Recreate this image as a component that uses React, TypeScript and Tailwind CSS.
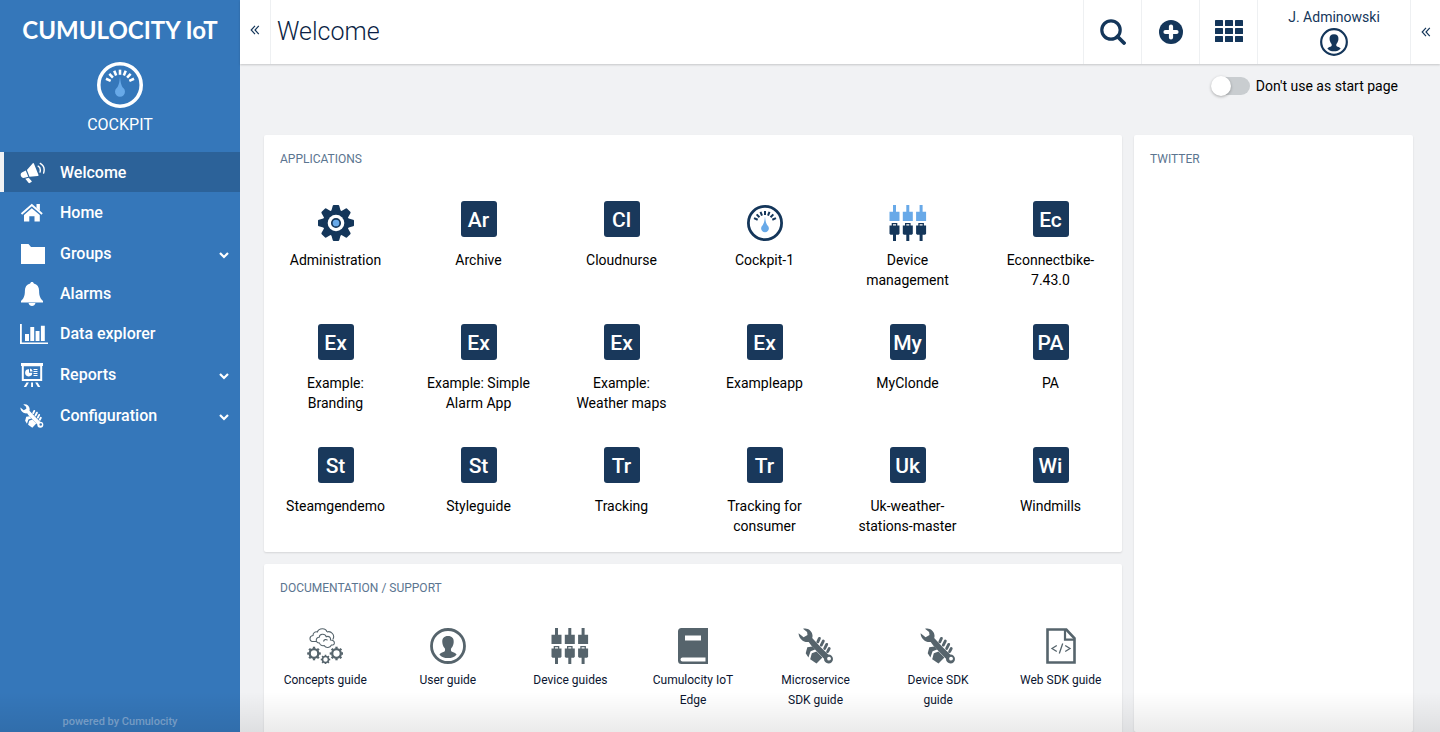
import React from "react";

type IconProps = { className?: string };

function Gauge({ className, needle }: IconProps & { needle: string }) {
  return (
    <svg viewBox="0 0 36 36" className={className} fill="none" stroke="currentColor" aria-hidden="true">
      <circle cx="18" cy="18" r="16.6" strokeWidth="2.8" />
      <g strokeWidth="2">
        {[-66, -44, -22, 0, 22, 44, 66].map((a) => (
          <path key={a} d="M18 6v4" transform={`rotate(${a} 18 18)`} />
        ))}
      </g>
      <path d="M18 11.300c.5 5 1 7.300 2.600 9.100a3.900 3.900 0 1 1-5.200 0c1.600-1.800 2.100-4.100 2.600-9.100z" fill={needle} stroke="none" />
    </svg>
  );
}

function Megaphone({ className }: IconProps) {
  return (
    <svg viewBox="0 0 26 22" className={className} fill="currentColor" aria-hidden="true">
      <path d="M12.800 1.300q.8-.5 1.200.4l4.500 11.400q.3 1-.7 1l-8.300.6L6.900 8z" />
      <path d="M5.800 8.600 8.300 14.800l-3.600 1C1.200 16.800-1 11.800 2.300 10.200z" />
      <path d="m5.300 16.800 3.400-1 2.900 3.100q.5.700-.2 1.100l-1.700 1q-.7.400-1.200-.2z" />
      <path d="M18.200 4.200c1.700 1 2.500 3.400 1.800 5.900M20.300 1.400c3.300 2 4.500 6 3.300 9.700" fill="none" stroke="currentColor" strokeWidth="1.400" strokeLinecap="round" />
    </svg>
  );
}

function House({ className }: IconProps) {
  return (
    <svg viewBox="0 0 24 20" className={className} fill="currentColor" aria-hidden="true">
      <path d="m1.500 11 10.300-9 10.300 9" fill="none" stroke="currentColor" strokeWidth="1.900" />
      <path d="M16.500 1h3.400v7l-3.400-3z" />
      <path d="M4 11.900 11.800 5.300l8 6.600V18.500h-5.300v-5.300H9.300v5.300H4z" />
    </svg>
  );
}

function Folder({ className }: IconProps) {
  return (
    <svg viewBox="0 0 26 22" className={className} fill="currentColor" aria-hidden="true">
      <path d="M1 1h7.500l2.500 3h14v17H1z" />
    </svg>
  );
}

function Bell({ className }: IconProps) {
  return (
    <svg viewBox="0 0 24 26" className={className} fill="currentColor" aria-hidden="true">
      <path d="M12 1c1 0 1.700.7 1.800 1.600 3.600.9 5.300 3.600 5.300 7.200 0 5.700 1.400 7.800 3.900 10.200v1.500H1V20c2.500-2.400 3.900-4.500 3.900-10.200 0-3.600 1.700-6.300 5.300-7.200C10.300 1.700 11 1 12 1z" />
      <path d="M8.500 22h7c-.5 1.900-1.800 3-3.500 3s-3-1.100-3.500-3z" />
    </svg>
  );
}

function Chart({ className }: IconProps) {
  return (
    <svg viewBox="0 0 28 22" className={className} fill="currentColor" aria-hidden="true">
      <path d="M0 1h1.800v18.500H28V21H0zM5 11h4v7H5zM10.300 4h3.900v14h-3.900zM15.600 8h3.900v10h-3.900zM20.900 2.700h3.900V18h-3.900z" />
    </svg>
  );
}

function Presentation({ className }: IconProps) {
  return (
    <svg viewBox="0 0 24 26" className={className} fill="currentColor" aria-hidden="true">
      <path d="M1 1h22v3h-.8v15H1.800V4H1zM3.800 4.200v12.800h16.400V4.200z" fillRule="evenodd" />
      <path d="M9 7.200v3.600h3.300A3.600 3.600 0 1 1 9 7.200zM10 6.600a3.400 3.400 0 0 1 2.700 3H10z" />
      <path d="M13.500 7h4v1h-4zM13.500 9h4v1h-4zM13.500 11h4v1h-4zM13.500 13h4v1h-4z" />
      <path d="M11.100 20.500h1.900V25h-1.900zM6.500 20.500h2.400L6.200 25H3.800zM15.200 20.500h2.400l2.700 4.500h-2.400z" />
    </svg>
  );
}

function Tools({ className }: IconProps) {
  return (
    <svg viewBox="0 0 36 36" className={className} fill="currentColor" aria-hidden="true">
      <path d="M5 .8C9.500-.5 14 2.500 14.500 7.300c.1 1 0 1.900-.3 2.800L23 19.500l7.300 7a4.500 4.500 0 1 1-4.300 4.300l-9-9.300c-2.200-2.300-4.500-4.500-6.300-7.500C6 14.800.6 11 .6 5.300l5 3.900 3.900-2.200-.4-3zM31 28.700a1.900 1.900 0 1 0 .1 3.800 1.900 1.900 0 0 0-.1-3.800z" fillRule="evenodd" />
      <g fill="none" stroke="currentColor" strokeWidth="2.900" strokeLinecap="round">
        <path d="m19.800 13.800 1.600-3.400M23.300 17.100l2-4M26.700 20.400l2-4M29.600 23.600l1.600-3" />
      </g>
      <path d="m9.300 19.300 5.200-.9 2.600 3.200-4.500 1.600-2.200 6.300-2.700-4.300z" />
      <path d="m13.800 25.300 4.700-1.900 5.900 6-5.900 6.200-6.300-4.300z" />
    </svg>
  );
}

function Person({ className }: IconProps) {
  return (
    <svg viewBox="0 0 36 36" className={className} fill="currentColor" aria-hidden="true">
      <circle cx="18" cy="18" r="16.500" fill="none" stroke="currentColor" strokeWidth="2.800" />
      <path d="M18 8c4 0 6 2.300 5.700 6.200-.2 2.500-1 4.500-2.300 5.900-.6.700-.7 2.700.1 3.300 1.200.8 3.700 1 5.100 3-2 2.600-5 3.600-8.600 3.600s-6.600-1-8.600-3.600c1.400-2 3.900-2.200 5.100-3 .8-.6.700-2.600.1-3.300-1.300-1.400-2.100-3.400-2.300-5.900C12 10.300 14 8 18 8z" />
    </svg>
  );
}

function Plugs({ className, top }: IconProps & { top: string }) {
  return (
    <svg viewBox="0 0 38 36" className={className} fill="currentColor" aria-hidden="true">
      {[0, 13.300, 26.600].map((x) => (
        <g key={x} transform={`translate(${x} 0)`}>
          <path d="M4 0h3v6.700h3.500V16H.5V6.700H4z" fill={top} />
          <path d="M2.700 18h5.600v2.500h2.200v8.300l-1 1H7V36H4v-6.200H1.500l-1-1v-8.300h2.200zM4 19.200v1.300h3v-1.300z" fillRule="evenodd" />
        </g>
      ))}
    </svg>
  );
}

const TEETH = [0, 45, 90, 135, 180, 225, 270, 315];

function Gear({ className }: IconProps) {
  return (
    <svg viewBox="0 0 36 36" className={className} fill="currentColor" aria-hidden="true">
      {TEETH.map((a) => (
        <path key={a} d="M13 7 14.700.9q.2-.9 1.100-.9h4.400q.9 0 1.100.9L23 7z" transform={`rotate(${a} 18 18)`} />
      ))}
      <circle cx="18" cy="18" r="13.200" />
      <circle cx="18" cy="18" r="8.300" fill="#fff" />
      <circle cx="18" cy="18" r="4.200" fill="#68a9e8" stroke="currentColor" strokeWidth="1.700" />
    </svg>
  );
}

function CloudGears({ className }: IconProps) {
  const gears = [
    { x: 7, y: 25.5, s: 1 },
    { x: 29.5, y: 25.5, s: 1 },
    { x: 18.5, y: 31.5, s: 0.7 },
  ];
  return (
    <svg viewBox="0 0 36 36" className={className} fill="none" stroke="currentColor" aria-hidden="true">
      <path d="M10 13.500H6.500C1.800 13.500 2 8 6 7.500 6 4.500 8.500 3.300 10.300 4 12-.5 19-.3 20 4" strokeWidth="1.100" />
      <path d="M20 4c4-1.500 8.500 3 5.800 7.500" strokeWidth="1.100" />
      <path d="M12.500 15c-4.500.3-4-6-.3-5.800C12.500 5.500 18 5.200 19.300 8.700c2.700-1 4.700.8 4.200 3.300 5.500.3 4.500 5.700 1 5-1.500 3-5.500 3.300-7.300.6-2.300.6-4.200-.4-4.700-2.600zM16.500 13.500c.5-2 2.500-2.500 4-1.300" strokeWidth="1.100" />
      {gears.map((g) => (
        <g key={g.x} transform={`translate(${g.x} ${g.y}) scale(${g.s})`}>
          <circle r="4.300" strokeWidth="2.300" />
          {TEETH.map((a) => (
            <path key={a} d="M0-4.800V-6.800" strokeWidth="2.300" transform={`rotate(${a})`} />
          ))}
        </g>
      ))}
    </svg>
  );
}

function Book({ className }: IconProps) {
  return (
    <svg viewBox="0 0 36 36" className={className} fill="currentColor" fillRule="evenodd" aria-hidden="true">
      <path d="M6.500 0H33v36H6.500Q3 36 3 32.500v-29Q3 0 6.500 0zM10 7.500v5h16v-5zM7.500 29.500a2 2 0 0 0 0 4H30.500v-4z" />
    </svg>
  );
}

function CodeFile({ className }: IconProps) {
  return (
    <svg viewBox="0 0 36 36" className={className} fill="none" stroke="currentColor" aria-hidden="true">
      <path d="M4.500 1.500h18.800l8.200 8.800v24.200h-27z" strokeWidth="2.600" />
      <path d="M22 2v9.700h9.500" strokeWidth="2.200" />
      <path d="m13.800 17.500-4.800 3 4.800 3M22.200 17.500l4.800 3-4.800 3M19.700 15.500l-3.400 10" strokeWidth="1.300" />
    </svg>
  );
}

function DoubleChevron({ className }: IconProps) {
  return (
    <svg viewBox="0 0 10 10" className={className} fill="none" stroke="currentColor" strokeWidth="1.200" aria-hidden="true">
      <path d="M5 .8 1.200 5 5 9.200M8.800.8 5 5l3.800 4.200" />
    </svg>
  );
}

function Chevron({ className }: IconProps) {
  return (
    <svg viewBox="0 0 10 8" className={className} fill="none" stroke="currentColor" strokeWidth="2.200" aria-hidden="true">
      <path d="m1 2 4 4 4-4" />
    </svg>
  );
}

function SearchIcon({ className }: IconProps) {
  return (
    <svg viewBox="0 0 26 26" className={className} fill="none" stroke="currentColor" aria-hidden="true">
      <circle cx="11" cy="11" r="9.200" strokeWidth="3.200" />
      <path d="m17.500 17.500 6.500 6.500" strokeWidth="3.800" strokeLinecap="round" />
    </svg>
  );
}

function PlusIcon({ className }: IconProps) {
  return (
    <svg viewBox="0 0 24 24" className={className} aria-hidden="true">
      <circle cx="12" cy="12" r="12" fill="currentColor" />
      <path d="M12 6.500v11M6.500 12h11" stroke="#fff" strokeWidth="4.200" strokeLinecap="round" />
    </svg>
  );
}

function GridIcon({ className }: IconProps) {
  return (
    <svg viewBox="0 0 28 22" className={className} fill="currentColor" aria-hidden="true">
      {[0, 8, 16].map((y) => [0, 10, 20].map((x) => <rect key={`${x}-${y}`} x={x} y={y} width="8" height="6" rx="0.6" />))}
    </svg>
  );
}

const NAV = [
  { label: "Welcome", icon: <Megaphone className="h-[22px] w-[26px]" />, active: true },
  { label: "Home", icon: <House className="h-5 w-6" /> },
  { label: "Groups", icon: <Folder className="h-[22px] w-[26px]" />, expandable: true },
  { label: "Alarms", icon: <Bell className="h-[26px] w-6" /> },
  { label: "Data explorer", icon: <Chart className="h-[22px] w-7" /> },
  { label: "Reports", icon: <Presentation className="h-[26px] w-6" />, expandable: true },
  { label: "Configuration", icon: <Tools className="h-6 w-6" />, expandable: true },
];

const APPS: { label: string; code?: string; icon?: React.ReactNode }[] = [
  { label: "Administration", icon: <Gear className="size-9" /> },
  { label: "Archive", code: "Ar" },
  { label: "Cloudnurse", code: "Cl" },
  { label: "Cockpit-1", icon: <Gauge className="size-9" needle="#68a9e8" /> },
  { label: "Device management", icon: <Plugs className="h-9 w-[38px]" top="#68a9e8" /> },
  { label: "Econnectbike-7.43.0", code: "Ec" },
  { label: "Example: Branding", code: "Ex" },
  { label: "Example: Simple Alarm App", code: "Ex" },
  { label: "Example: Weather maps", code: "Ex" },
  { label: "Exampleapp", code: "Ex" },
  { label: "MyClonde", code: "My" },
  { label: "PA", code: "PA" },
  { label: "Steamgendemo", code: "St" },
  { label: "Styleguide", code: "St" },
  { label: "Tracking", code: "Tr" },
  { label: "Tracking for consumer", code: "Tr" },
  { label: "Uk-weather-stations-master", code: "Uk" },
  { label: "Windmills", code: "Wi" },
];

const DOCS = [
  { label: "Concepts guide", icon: <CloudGears className="size-9" /> },
  { label: "User guide", icon: <Person className="size-9" /> },
  { label: "Device guides", icon: <Plugs className="h-9 w-[38px]" top="currentColor" /> },
  { label: "Cumulocity IoT Edge", icon: <Book className="size-9" /> },
  { label: "Microservice SDK guide", icon: <Tools className="size-9" /> },
  { label: "Device SDK guide", icon: <Tools className="size-9" /> },
  { label: "Web SDK guide", icon: <CodeFile className="size-9" /> },
];

function Sidebar() {
  return (
    <aside className="flex w-60 shrink-0 flex-col bg-[#3577ba] text-white">
      <div className="flex h-[152px] flex-col items-center pt-[14px]">
        <div className="font-['Lato'] text-[24px] leading-8 font-bold whitespace-nowrap">CUMULOCITY IoT</div>
        <Gauge className="mt-4 size-[46px]" needle="#68a9e8" />
        <div className="mt-[7px] text-base leading-5">COCKPIT</div>
      </div>
      <nav>
        <ul>
          {NAV.map((item) => (
            <li key={item.label}>
              <a
                href="#"
                aria-current={item.active ? "page" : undefined}
                className={`flex items-center border-l-4 pt-0.5 pr-[11px] pl-4 font-medium ${item.expandable ? "h-[41px]" : "h-10"} ${
                  item.active ? "border-[#f1f2f4] bg-[#2c6299]" : "border-transparent"
                }`}
              >
                <span className="flex w-10 shrink-0">
                  <span className="flex min-w-6 justify-center">{item.icon}</span>
                </span>
                <span className="flex-1 text-base">{item.label}</span>
                {item.expandable && <Chevron className="mt-0.5 h-2 w-2.5" />}
              </a>
            </li>
          ))}
        </ul>
      </nav>
      <div className="mt-auto text-center text-[11px] leading-5 font-medium text-[#7da5d0]">powered by Cumulocity</div>
    </aside>
  );
}

function Header() {
  const cell = "flex items-center justify-center border-r border-[#eef0f2]";
  return (
    <header className="relative flex h-16 shrink-0 bg-white text-[#14365a] shadow-[0_1px_2px_rgba(0,0,0,0.18)]">
      <button type="button" aria-label="Collapse menu" className={`${cell} w-[31px] pb-1`}>
        <DoubleChevron className="size-[10px]" />
      </button>
      <h1 className="flex flex-1 items-center pl-[6px] text-[25px] font-light text-[#0b1f45]">Welcome</h1>
      <button type="button" aria-label="Search" className={`${cell} w-[59px] border-l`}>
        <SearchIcon className="size-[26px]" />
      </button>
      <button type="button" aria-label="Add" className={`${cell} w-[58px]`}>
        <PlusIcon className="size-6" />
      </button>
      <button type="button" aria-label="Applications" className={`${cell} w-[58px] pb-0.5`}>
        <GridIcon className="h-[22px] w-7" />
      </button>
      <button type="button" className={`${cell} w-[153px] flex-col pb-0.5 text-sm leading-5`}>
        <span>J. Adminowski</span>
        <Person className="mt-px size-7" />
      </button>
      <button type="button" aria-label="Open drawer" className="flex w-[29px] items-center justify-center">
        <DoubleChevron className="size-[10px]" />
      </button>
    </header>
  );
}

function Card({ title, className = "", children }: { title: string; className?: string; children?: React.ReactNode }) {
  return (
    <section className={`rounded-xs bg-white shadow-[0_1px_2px_rgba(0,0,0,0.12)] ${className}`}>
      <h2 className="px-4 pt-[14px] text-xs leading-5 text-[#5b7590]">{title}</h2>
      {children}
    </section>
  );
}

export default function App() {
  return (
    <div className="relative flex h-screen overflow-hidden bg-[#f1f2f4] font-['Roboto',sans-serif] text-black">
      <Sidebar />
      <div className="flex min-w-0 flex-1 flex-col">
        <Header />
        <main className="flex min-h-0 flex-1 flex-col pr-[27px] pl-6">
          <label className="mt-3 flex h-5 items-center gap-[6px] self-end pr-[15px] text-sm">
            <input
              type="checkbox"
              className="relative h-[18px] w-[38px] appearance-none rounded-full bg-[#c9cdd0] before:absolute before:-top-px before:-left-px before:size-5 before:rounded-full before:bg-white before:shadow-[0_1px_3px_rgba(0,0,0,0.3)] checked:before:left-[19px]"
            />
            Don't use as start page
          </label>
          <div className="mt-[39px] flex min-h-0 flex-1 gap-3">
            <div className="min-w-0 flex-1">
              <Card title="APPLICATIONS" className="pb-4">
                <div className="mt-8 grid auto-rows-[minmax(89px,auto)] grid-cols-6 gap-y-[34px]">
                  {APPS.map((app) => (
                    <a key={app.label} href="#" className="flex flex-col items-center px-4 text-center text-sm leading-5">
                      <span className="flex h-12 shrink-0 text-[#14365a]">
                        {app.code ? (
                          <span className="flex size-9 items-center justify-center rounded-[3px] bg-[#19385b] pt-[3px] text-[21px] leading-none font-medium text-white">
                            {app.code}
                          </span>
                        ) : (
                          <span className="pt-1">{app.icon}</span>
                        )}
                      </span>
                      <span className="mt-px">{app.label}</span>
                    </a>
                  ))}
                </div>
              </Card>
              <Card title="DOCUMENTATION / SUPPORT" className="mt-3 pb-6">
                <div className="mt-[30px] grid grid-cols-7">
                  {DOCS.map((doc) => (
                    <a key={doc.label} href="#" className="flex flex-col items-center px-4 text-center text-xs leading-5 text-[#0b1530]">
                      <span className="mb-[6px] flex h-9 shrink-0 text-[#56646c]">{doc.icon}</span>
                      <span>{doc.label}</span>
                    </a>
                  ))}
                </div>
              </Card>
            </div>
            <Card title="TWITTER" className="w-[279px] shrink-0" />
          </div>
        </main>
      </div>
      <div className="pointer-events-none absolute inset-x-0 bottom-0 h-10 bg-linear-to-b from-transparent to-black/8" />
    </div>
  );
}
